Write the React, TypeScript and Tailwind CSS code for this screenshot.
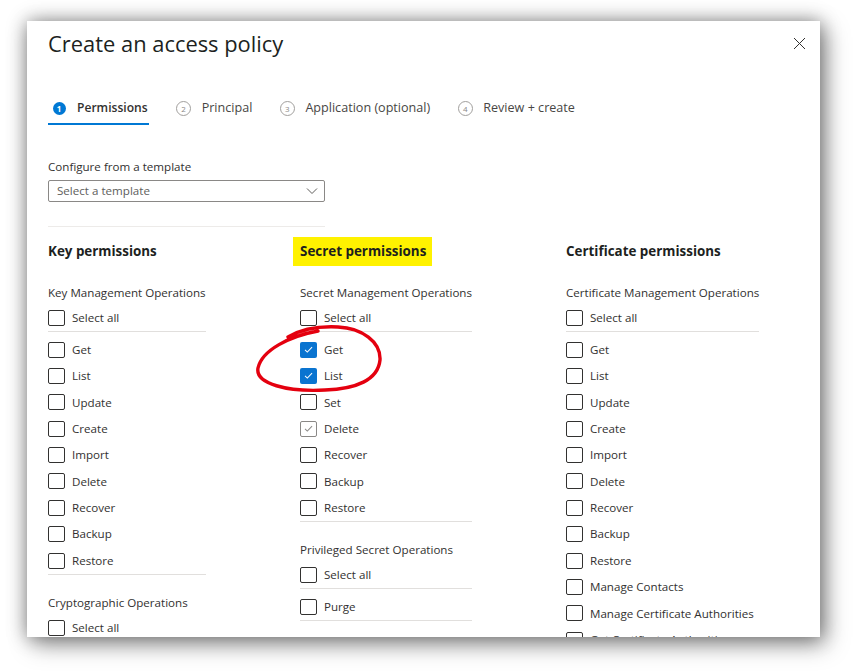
import React from 'react'

// ─────────────────────────────────────────────
// Create an access policy — Key Vault dialog (step 1: permissions)
// ─────────────────────────────────────────────

type Item = { label: string; state?: 'on' | 'soft' }

type Group = { title: string; items: Item[] }

type Column = { title: string; highlight?: boolean; width: string; groups: Group[] }

const BASIC = ['Get', 'List', 'Update', 'Create', 'Import', 'Delete', 'Recover', 'Backup', 'Restore']

const COLUMNS: Column[] = [
  {
    title: 'Key permissions',
    width: 'w-[252px]',
    groups: [
      { title: 'Key Management Operations', items: BASIC.map((label) => ({ label })) },
      { title: 'Cryptographic Operations', items: [] },
    ],
  },
  {
    title: 'Secret permissions',
    highlight: true,
    width: 'w-[266px]',
    groups: [
      {
        title: 'Secret Management Operations',
        items: [
          { label: 'Get', state: 'on' },
          { label: 'List', state: 'on' },
          { label: 'Set' },
          { label: 'Delete', state: 'soft' },
          { label: 'Recover' },
          { label: 'Backup' },
          { label: 'Restore' },
        ],
      },
      { title: 'Privileged Secret Operations', items: [{ label: 'Purge' }] },
    ],
  },
  {
    title: 'Certificate permissions',
    width: 'flex-1',
    groups: [
      {
        title: 'Certificate Management Operations',
        items: [
          ...BASIC.map((label) => ({ label })),
          { label: 'Manage Contacts' },
          { label: 'Manage Certificate Authorities' },
          { label: 'Get Certificate Authorities' },
        ],
      },
    ],
  },
]

const STEPS = ['Permissions', 'Principal', 'Application (optional)', 'Review + create']

function Check({ state }: { state?: 'on' | 'soft' }) {
  if (state === 'on') {
    return (
      <span className="flex h-[16px] w-[17px] items-center justify-center rounded-[2px] bg-[#0a74d0]">
        <svg width="11" height="11" viewBox="0 0 12 12" fill="none">
          <path d="M2.2 6.4l2.5 2.4 5.2-5.4" stroke="#fff" strokeWidth="1.1" />
        </svg>
      </span>
    )
  }
  return (
    <span
      className={
        state === 'soft'
          ? 'flex h-[16px] w-[17px] items-center justify-center rounded-[2px] border border-[#8a8886] bg-white'
          : 'flex h-[16px] w-[17px] items-center justify-center rounded-[2px] border border-[#323130] bg-white'
      }
    >
      {state === 'soft' && (
        <svg width="11" height="11" viewBox="0 0 12 12" fill="none">
          <path d="M2.2 6.4l2.5 2.4 5.2-5.4" stroke="#8a8886" strokeWidth="1.1" />
        </svg>
      )}
    </span>
  )
}

function Row({ item }: { item: Item }) {
  return (
    <div className="flex h-[26.375px] items-center gap-[7px] whitespace-nowrap">
      <Check state={item.state} />
      <span className="text-[11.6px] text-[#323130]">{item.label}</span>
    </div>
  )
}

function PermGroup({ group, first }: { group: Group; first: boolean }) {
  return (
    <div className={first ? '' : 'mt-[19px]'}>
      <div className="h-[18px] whitespace-nowrap text-[11.6px] leading-[18px] text-[#323130]">{group.title}</div>
      <div className="mt-[3px] border-b border-[#e1dfdd]">
        <Row item={{ label: 'Select all' }} />
      </div>
      {group.items.length > 0 && (
        <div className="mt-[4px] border-b border-[#e1dfdd]">
          {group.items.map((it) => (
            <Row key={it.label} item={it} />
          ))}
        </div>
      )}
    </div>
  )
}

export default function App() {
  return (
    <div className="relative h-[671px] w-[860px] overflow-hidden bg-white font-['Open_Sans',sans-serif]">
      <div className="ml-[27px] mt-[21px] h-[616px] w-[793px] overflow-hidden bg-white shadow-[0_0_18px_rgba(0,0,0,0.42),6px_8px_22px_rgba(0,0,0,0.35)]">
        <div className="pl-[21px] pt-[8px]">
          {/* Header */}
          <div className="flex h-[30px] items-center justify-between pr-[14px]">
            <h1 className="text-[21.9px] leading-[30px] text-[#201f1e]">Create an access policy</h1>
            <svg width="13" height="13" viewBox="0 0 13 13" className="-mt-[2px]">
              <path d="M1 1l11 11M12 1L1 12" stroke="#323130" strokeWidth="1" />
            </svg>
          </div>

          {/* Steps */}
          <div className="mt-[33px] flex h-[33px] items-stretch">
            {STEPS.map((s, i) => (
              <div
                key={s}
                className={
                  i === 0
                    ? 'mr-[27px] flex items-center gap-[10px] border-b-2 border-[#0078d4] pl-[3px] pr-[1px] pt-[2px]'
                    : 'mr-[27px] flex items-center gap-[10px] border-b-2 border-transparent pt-[2px]'
                }
              >
                <span className="flex w-[16px] justify-center">
                  {i === 0 ? (
                    <span className="flex h-[13px] w-[13px] items-center justify-center rounded-full bg-[#0078d4] text-[8px] font-bold text-white">
                      1
                    </span>
                  ) : (
                    <span className="flex h-[15px] w-[15px] items-center justify-center rounded-full border border-[#a19f9d] text-[8px] text-[#8a8886]">
                      {i + 1}
                    </span>
                  )}
                </span>
                <span
                  className={
                    i === 0
                      ? 'text-[12.1px] font-semibold text-[#323130]'
                      : 'text-[12.6px] text-[#484644]'
                  }
                >
                  {s}
                </span>
              </div>
            ))}
          </div>

          {/* Template */}
          <div className="mt-[33px] h-[18px] text-[11.6px] leading-[18px] text-[#323130]">Configure from a template</div>
          <div className="mt-[4px] flex h-[22px] w-[277px] items-center justify-between rounded-[2px] border border-[#8a8886] pl-[8px] pr-[6px]">
            <span className="text-[11.6px] text-[#605e5c]">Select a template</span>
            <svg width="12" height="8" viewBox="0 0 12 8" fill="none">
              <path d="M1 1.5l5 5 5-5" stroke="#605e5c" strokeWidth="1" />
            </svg>
          </div>
          <div className="mt-[24px] h-px w-[277px] bg-[#edebe9]" />

          {/* Permission columns */}
          <div className="mt-[10px] flex">
            {COLUMNS.map((col) => (
              <div key={col.title} className={col.width}>
                <div className="flex h-[29px] items-center">
                  <span
                    className={
                      col.highlight
                        ? '-ml-[7px] flex h-[29px] items-center bg-[#fff200] pl-[7px] pr-[6px] text-[13.4px] font-bold text-[#201f1e]'
                        : 'text-[13.4px] font-bold text-[#201f1e]'
                    }
                  >
                    {col.title}
                  </span>
                </div>
                <div className="mt-[18px] w-fit">
                  {col.groups.map((g, gi) => (
                    <PermGroup key={g.title} group={g} first={gi === 0} />
                  ))}
                </div>
              </div>
            ))}
          </div>
        </div>
      </div>

      {/* Hand-drawn red mark around Get / List */}
      <svg className="pointer-events-none absolute left-0 top-0" width="860" height="671" fill="none">
        <path
          d="M318 331 C290 336 262 350 258 368 C255 384 288 392 325 390 C356 389 378 380 380 360 C381 342 362 328 338 327 C318 326 300 330 288 337"
          stroke="#e4000f"
          strokeWidth="3.4"
          strokeLinecap="round"
        />
      </svg>
    </div>
  )
}
